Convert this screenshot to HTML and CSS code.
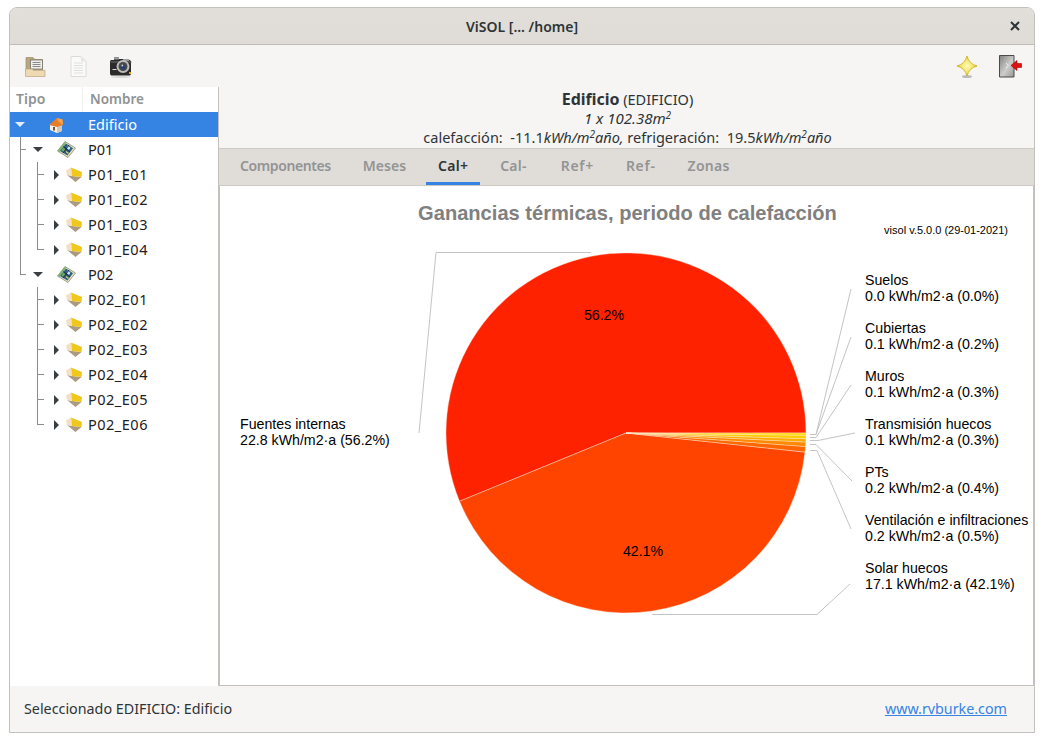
FILE: index.html
```html
<!DOCTYPE html>
<html lang="es">
<head>
<meta charset="utf-8">
<title>ViSOL</title>
<link rel="stylesheet" href="styles.css">
</head>
<body>
<svg class="defs" width="0" height="0">
  <defs>
    <linearGradient id="door" x1="0" y1="0" x2="1" y2="1">
      <stop offset="0" stop-color="#7f7f7d"/>
      <stop offset=".55" stop-color="#cdcdcb"/>
      <stop offset="1" stop-color="#969694"/>
    </linearGradient>
    <radialGradient id="star">
      <stop offset="0" stop-color="#fff9b8"/>
      <stop offset="1" stop-color="#f0d83c"/>
    </radialGradient>
    <symbol id="i-house" viewBox="0 0 16 16">
      <path d="M2 8 9 6l5 2v6l-5 2-7-3z" fill="#f5f1ea"/>
      <path d="M9 9.500 14 8v6l-5 2z" fill="#cfc8bc"/>
      <path d="M1 8 9 1 14.500 2.500 15 8 9 10z" fill="#e67d28"/>
      <path d="M9 1 14.500 2.500 15 8 10 4z" fill="#f4a552"/>
      <rect x="5" y="10" width="2" height="3.500" fill="#7a5230"/>
    </symbol>
    <symbol id="i-floor" viewBox="0 0 19 17">
      <path d="M8 .5 18.500 7 11 16.500 .5 10z" fill="#e9dfb8" stroke="#7f8f7c" stroke-width=".8"/>
      <path d="M8 .5 .5 10 2.500 11.300 9 2z" fill="#7fb56e"/>
      <path d="M9 2.500 16 7.300 10.500 14.500 3 10z" fill="#2c5f86"/>
      <path d="M6 6.500 9 8.500 7 11 4.500 9.500z" fill="#6aa85c"/>
      <path d="M10.500 4.500 13.500 6.800 12 9 9.500 7z" fill="#d5e4ec"/>
      <path d="M6.500 5.500 13 11M12 4 6 12" stroke="#14294a" stroke-width="1"/>
      <path d="M9 10.500 11.500 12.500" stroke="#e5d060" stroke-width="1.200"/>
    </symbol>
    <symbol id="i-box" viewBox="0 0 16 15">
      <path d="M1 8 6 9 15.500 10 9.500 15z" fill="#a99a80"/>
      <path d="M0 3.500 5 .5 6 9 1 8z" fill="#f3dfc6"/>
      <path d="M5 .5 16 5 15.500 10 6 9z" fill="#f0c81c"/>
    </symbol>
  </defs>
</svg>

<main class="window">
  <header class="titlebar">
    <h1 class="title">ViSOL [... /home]</h1>
    <svg class="close" width="10" height="10" viewBox="0 0 10 10"><path d="M1 1 9 9M9 1 1 9" stroke="#2e3436" stroke-width="2"/></svg>
  </header>

  <div class="toolbar">
    <div class="tools">
      <svg class="tool" viewBox="0 0 24 24"><path d="M3 3.500h7l2 2h7.500V18H3z" fill="#b8a67e" stroke="#a08e66" stroke-width=".7"/><rect x="7.500" y="6" width="12" height="9" fill="#f2f0ea" stroke="#6f6f6c" stroke-width=".8"/><path d="M9.500 8.500h8M9.500 10.500h8M9.500 12.500h8" stroke="#8a8a88"/><path d="M2.500 15 H9 l1.500 1.300 H22 V22.500 H2.500z" fill="#edd9b2" stroke="#b8a67e" stroke-width=".7"/></svg>
      <svg class="tool" viewBox="0 0 24 24"><path d="M5 2.500h10l5 5v15H5z" fill="#fafaf8" stroke="#dcdcd6"/><path d="M15 2.500v5h5z" fill="#e6e6e0"/><path d="M8 9h9M8 11.500h9M8 14h9M8 16.500h9M8 19h9" stroke="#e0e0da"/></svg>
      <svg class="tool" viewBox="0 0 24 24"><path d="M2 6h3V3.500h5V5h9l3 2v13l-1 1.500H2L1 20V7z" fill="#2b2b2b"/><path d="M5 4h5v1.500H5zM14 5h6v2h-6z" fill="#9c9c9c"/><path d="M1.500 8h21" stroke="#6e6e6e"/><circle cx="14" cy="12.500" r="6.500" fill="#bdbdbd"/><circle cx="14" cy="12.500" r="4.500" fill="#4a4a4a"/><circle cx="14" cy="13" r="2.500" fill="#23406f"/><circle cx="13.300" cy="11.500" r=".9" fill="#d8d8d8"/><path d="M3.500 15.500h4" stroke="#ddd"/><rect x="20" y="18" width="2" height="2" fill="#e8a020"/><ellipse cx="12" cy="23" rx="10" ry=".8" fill="#cfcfcf"/></svg>
    </div>
    <div class="tools">
      <svg class="tool" viewBox="0 0 24 24"><ellipse cx="12" cy="22.500" rx="5" ry="1.500" fill="#bbb"/><path d="M12 2Q14 10 22 12 14 14 12 22 10 14 2 12 10 10 12 2z" fill="url(#star)" stroke="#d4b62c"/></svg>
      <svg class="tool" viewBox="0 0 24 24"><path d="M1.500 1.500h14.500v21.500H1.500z" fill="url(#door)" stroke="#4a4a4a"/><path d="M8 9l2.500 2.500L8 14" fill="none" stroke="#eee"/><path d="M23.500 9.500h-4.500V6.500L13 11.500l6 5V13.500h4.500z" fill="#e01010" stroke="#a80000" stroke-width=".6"/></svg>
    </div>
  </div>

  <div class="content">
    <aside class="tree">
      <div class="tree-head">
        <span class="col-tipo">Tipo</span>
        <span class="col-nombre">Nombre</span>
      </div>
      <div class="row selected"><span class="exp exp-down exp-white"></span><svg class="ic ic-0"><use href="#i-house"/></svg><span class="name name-0">Edificio</span></div>

      <div class="row"><span class="g g-t"></span><span class="exp exp-down"></span><svg class="ic ic-1"><use href="#i-floor"/></svg><span class="name name-1">P01</span></div>
      <div class="row"><span class="g g-v"></span><span class="h h-t"></span><span class="arrow"></span><svg class="ic ic-2"><use href="#i-box"/></svg><span class="name name-2">P01_E01</span></div>
      <div class="row"><span class="g g-v"></span><span class="h h-t"></span><span class="arrow"></span><svg class="ic ic-2"><use href="#i-box"/></svg><span class="name name-2">P01_E02</span></div>
      <div class="row"><span class="g g-v"></span><span class="h h-t"></span><span class="arrow"></span><svg class="ic ic-2"><use href="#i-box"/></svg><span class="name name-2">P01_E03</span></div>
      <div class="row"><span class="g g-v"></span><span class="h h-l"></span><span class="arrow"></span><svg class="ic ic-2"><use href="#i-box"/></svg><span class="name name-2">P01_E04</span></div>

      <div class="row"><span class="g g-l"></span><span class="exp exp-down"></span><svg class="ic ic-1"><use href="#i-floor"/></svg><span class="name name-1">P02</span></div>
      <div class="row"><span class="g"></span><span class="h h-t"></span><span class="arrow"></span><svg class="ic ic-2"><use href="#i-box"/></svg><span class="name name-2">P02_E01</span></div>
      <div class="row"><span class="g"></span><span class="h h-t"></span><span class="arrow"></span><svg class="ic ic-2"><use href="#i-box"/></svg><span class="name name-2">P02_E02</span></div>
      <div class="row"><span class="g"></span><span class="h h-t"></span><span class="arrow"></span><svg class="ic ic-2"><use href="#i-box"/></svg><span class="name name-2">P02_E03</span></div>
      <div class="row"><span class="g"></span><span class="h h-t"></span><span class="arrow"></span><svg class="ic ic-2"><use href="#i-box"/></svg><span class="name name-2">P02_E04</span></div>
      <div class="row"><span class="g"></span><span class="h h-t"></span><span class="arrow"></span><svg class="ic ic-2"><use href="#i-box"/></svg><span class="name name-2">P02_E05</span></div>
      <div class="row"><span class="g"></span><span class="h h-l"></span><span class="arrow"></span><svg class="ic ic-2"><use href="#i-box"/></svg><span class="name name-2">P02_E06</span></div>
    </aside>

    <section class="main">
      <div class="info">
        <p class="info-title"><b>Edificio</b> <small>(EDIFICIO)</small></p>
        <p class="info-line info-area"><i>1 x 102.38m<sup>2</sup></i></p>
        <p class="info-line">calefacción: &nbsp;-11.1<i>kWh/m<sup>2</sup>año,</i> refrigeración: &nbsp;19.5<i>kWh/m<sup>2</sup>año</i></p>
      </div>
      <nav class="tabs">
        <span class="tab tab-wide">Componentes</span>
        <span class="tab tab-plain">Meses</span>
        <span class="tab active">Cal+</span>
        <span class="tab">Cal-</span>
        <span class="tab tab-ref tab-ref-first">Ref+</span>
        <span class="tab tab-ref">Ref-</span>
        <span class="tab">Zonas</span>
      </nav>
      <div class="chart">
        <svg class="chart-svg" width="813" height="500" viewBox="220 185 813 500">
          <text class="c-title" x="627.500" y="219" text-anchor="middle">Ganancias térmicas, periodo de calefacción</text>
          <text class="c-ver" x="1008" y="232.500" text-anchor="end">visol v.5.0.0 (29-01-2021)</text>

          <g class="slices">
            <path fill="#ff2200" d="M626 432L806 432A180 180 0 1 0 459.500 500.300Z"/>
            <path fill="#ff4400" d="M626 432L459.500 500.300A180 180 0 0 0 805 451.100Z"/>
            <path fill="#ff6600" d="M626 432L805 451.100A180 180 0 0 0 805.500 445.500Z"/>
            <path fill="#ff8800" d="M626 432L805.500 445.500A180 180 0 0 0 805.800 441.100Z"/>
            <path fill="#ffaa00" d="M626 432L805.800 441.100A180 180 0 0 0 805.900 437.700Z"/>
            <path fill="#ffcc00" d="M626 432L805.900 437.700A180 180 0 0 0 806 434.200Z"/>
            <path fill="#ffdd00" d="M626 432L806 434.200A180 180 0 0 0 806 432Z"/>
          </g>

          <g class="leaders">
            <path d="M591 251.500H436L419 432"/>
            <path d="M652 613.500H817L850 583"/>
            <path d="M810 433.500H816L851 288"/>
            <path d="M810 433.500H816L851 336"/>
            <path d="M810 436.500H816L851 384"/>
            <path d="M810 439.500H818L855 432"/>
            <path d="M810 443.500H816L852 480"/>
            <path d="M810 449.500H817L851 528"/>
          </g>

          <text class="c-pct" x="604" y="319" text-anchor="middle">56.2%</text>
          <text class="c-pct" x="643" y="555" text-anchor="middle">42.1%</text>

          <text class="c-lab" x="240" y="428">Fuentes internas</text>
          <text class="c-lab" x="240" y="444">22.8 kWh/m2·a (56.2%)</text>
          <text class="c-lab" x="865" y="284">Suelos</text>
          <text class="c-lab" x="865" y="300">0.0 kWh/m2·a (0.0%)</text>
          <text class="c-lab" x="865" y="332">Cubiertas</text>
          <text class="c-lab" x="865" y="348">0.1 kWh/m2·a (0.2%)</text>
          <text class="c-lab" x="865" y="380">Muros</text>
          <text class="c-lab" x="865" y="396">0.1 kWh/m2·a (0.3%)</text>
          <text class="c-lab" x="865" y="428">Transmisión huecos</text>
          <text class="c-lab" x="865" y="444">0.1 kWh/m2·a (0.3%)</text>
          <text class="c-lab" x="865" y="476">PTs</text>
          <text class="c-lab" x="865" y="492">0.2 kWh/m2·a (0.4%)</text>
          <text class="c-lab" x="865" y="524">Ventilación e infiltraciones</text>
          <text class="c-lab" x="865" y="540">0.2 kWh/m2·a (0.5%)</text>
          <text class="c-lab" x="865" y="572">Solar huecos</text>
          <text class="c-lab" x="865" y="588">17.1 kWh/m2·a (42.1%)</text>
        </svg>
      </div>
    </section>
  </div>

  <footer class="status">
    <span>Seleccionado EDIFICIO: Edificio</span>
    <a class="link" href="#">www.rvburke.com</a>
  </footer>
</main>
</body>
</html>
```
FILE: styles.css
```css
* { box-sizing: border-box; }
html, body { margin: 0; height: 100%; background: #fff; }
body {
  padding: 7px 9px 9px;
  font: 14px "Noto Sans", "Open Sans", sans-serif;
  color: #2e3436;
  overflow: hidden;
}
.defs { display: block; height: 0; }
.window {
  width: 1026px;
  height: 726px;
  display: flex;
  flex-direction: column;
  background: #f6f5f4;
  border: 1px solid #c4c1bc;
  border-radius: 8px 8px 0 0;
  overflow: hidden;
}
.titlebar {
  flex: 0 0 37px;
  display: flex;
  align-items: center;
  justify-content: center;
  position: relative;
  background: linear-gradient(#e2dfdb, #dfdcd8);
  border-bottom: 1px solid #c0bbb5;
}
.title { margin: 0; font-size: 14px; font-weight: 600; color: #2e3436; }
.close { position: absolute; right: 14px; top: 13px; }

.toolbar {
  flex: 0 0 42px;
  display: flex;
  justify-content: space-between;
  align-items: center;
  padding: 0 12px 0 13px;
}
.tools { display: flex; gap: 19px; }
.tool { width: 24px; height: 24px; display: block; }

.content { flex: 1; display: flex; min-height: 0; }

.tree {
  flex: 0 0 209px;
  background: #fff;
  border-right: 1px solid #c4c1bc;
  font-size: 14px;
  color: #1c2022;
}
.tree-head {
  height: 25px;
  display: flex;
  align-items: center;
  color: #8f9294;
  font-weight: 600;
}
.col-tipo { flex: 0 0 73px; padding-left: 6px; height: 100%; line-height: 24px; border-right: 1px solid #f0efee; }
.col-nombre { padding-left: 7px; line-height: 23px; font-size: 13.500px; }

.row { height: 25px; display: flex; align-items: center; }
.selected { background: #3584e4; color: #fff; }

.g, .h { height: 25px; flex: none; background-repeat: no-repeat; }
.g { width: 18px; }
.h { width: 20px; }
.g-v { background-image: linear-gradient(#8c8c8c, #8c8c8c); background-size: 1px 100%; background-position: 10px 0; }
.g-t { background-image: linear-gradient(#8c8c8c, #8c8c8c), linear-gradient(#8c8c8c, #8c8c8c); background-size: 1px 100%, 6px 1px; background-position: 10px 0, 10px 12px; }
.g-l { background-image: linear-gradient(#8c8c8c, #8c8c8c), linear-gradient(#8c8c8c, #8c8c8c); background-size: 1px 13px, 6px 1px; background-position: 10px 0, 10px 12px; }
.h-t { background-image: linear-gradient(#8c8c8c, #8c8c8c), linear-gradient(#8c8c8c, #8c8c8c); background-size: 1px 100%, 7px 1px; background-position: 9px 0, 9px 12px; }
.h-l { background-image: linear-gradient(#8c8c8c, #8c8c8c), linear-gradient(#8c8c8c, #8c8c8c); background-size: 1px 13px, 7px 1px; background-position: 9px 0, 9px 12px; }

.exp { flex: 0 0 20px; display: flex; justify-content: center; }
.exp-down::before {
  content: "";
  border-left: 5px solid transparent;
  border-right: 5px solid transparent;
  border-top: 5px solid #3a3f41;
}
.exp-white::before { border-top-color: #e4eefb; }
.arrow {
  flex: 0 0 12px;
  display: flex;
  padding-left: 6px;
}
.arrow::before {
  content: "";
  border-top: 5px solid transparent;
  border-bottom: 5px solid transparent;
  border-left: 5px solid #3a3f41;
}
.ic { flex: none; display: block; }
.ic-0 { width: 16px; height: 16px; margin-left: 18px; }
.ic-1 { width: 19px; height: 17px; margin-left: 9px; }
.ic-2 { width: 16px; height: 15px; margin-left: 6px; }
.name { margin-left: 6px; margin-top: -2px; }
.name-0 { margin-left: 24px; font-size: 14.500px; }
.name-1 { margin-left: 12px; font-size: 14.500px; }
.name-2 { font-size: 14.500px; letter-spacing: .5px; }

.main { flex: 1; display: flex; flex-direction: column; min-width: 0; }
.info { flex: 0 0 61px; min-height: 0; text-align: center; padding-left: 2px; }
.info p { margin: 0; }
.info .info-title { line-height: 24px; font-size: 14px; margin-bottom: -3px; }
.info-title b { font-size: 16px; font-weight: 700; }
.info-title small { font-size: 14.500px; }
.info-line { line-height: 19px; font-size: 14.500px; }
.info-area { font-size: 15px; }
sup { font-size: 10px; line-height: 0; vertical-align: baseline; position: relative; top: -5px; }

.tabs {
  flex: 0 0 37px;
  display: flex;
  gap: 8px;
  padding-left: 9px;
  background: #e0dcd8;
  border-top: 1px solid #cdc9c4;
  border-bottom: 1px solid #cdc9c4;
}
.tab {
  padding: 0 12px;
  line-height: 33px;
  color: #929495;
  font-weight: 600;
  border-bottom: 3px solid transparent;
  height: 36px;
  letter-spacing: .25px;
}
.tab-wide { letter-spacing: -.4px; }
.tab-plain { letter-spacing: 0; }
.tab-ref { letter-spacing: .7px; }
.tab-ref-first { margin-left: 2px; }
.tab.active { color: #2e3436; border-bottom-color: #3584e4; }

.chart { flex: 1; background: #fff; border-left: 1px solid #c4c1bc; border-right: 1px solid #c4c1bc; border-bottom: 1px solid #c4c1bc; min-height: 0; }
.chart-svg { display: block; }
.slices path { stroke: #ffe9d8; stroke-width: .6; stroke-opacity: .7; }
.leaders path { fill: none; stroke: #c4c4c4; stroke-width: 1; }
.chart-svg text { font-family: "Liberation Sans", Arial, sans-serif; fill: #000; }
.c-title { font-size: 20.100px; font-weight: 700; fill: #808080 !important; }
.c-ver { font-size: 11px; }
.c-pct, .c-lab { font-size: 14.200px; }

.status {
  flex: 0 0 46px;
  display: flex;
  justify-content: space-between;
  align-items: center;
  padding: 0 27px 2px 14px;
  font-size: 14.300px;
}
.link { color: #3584e4; }
```
